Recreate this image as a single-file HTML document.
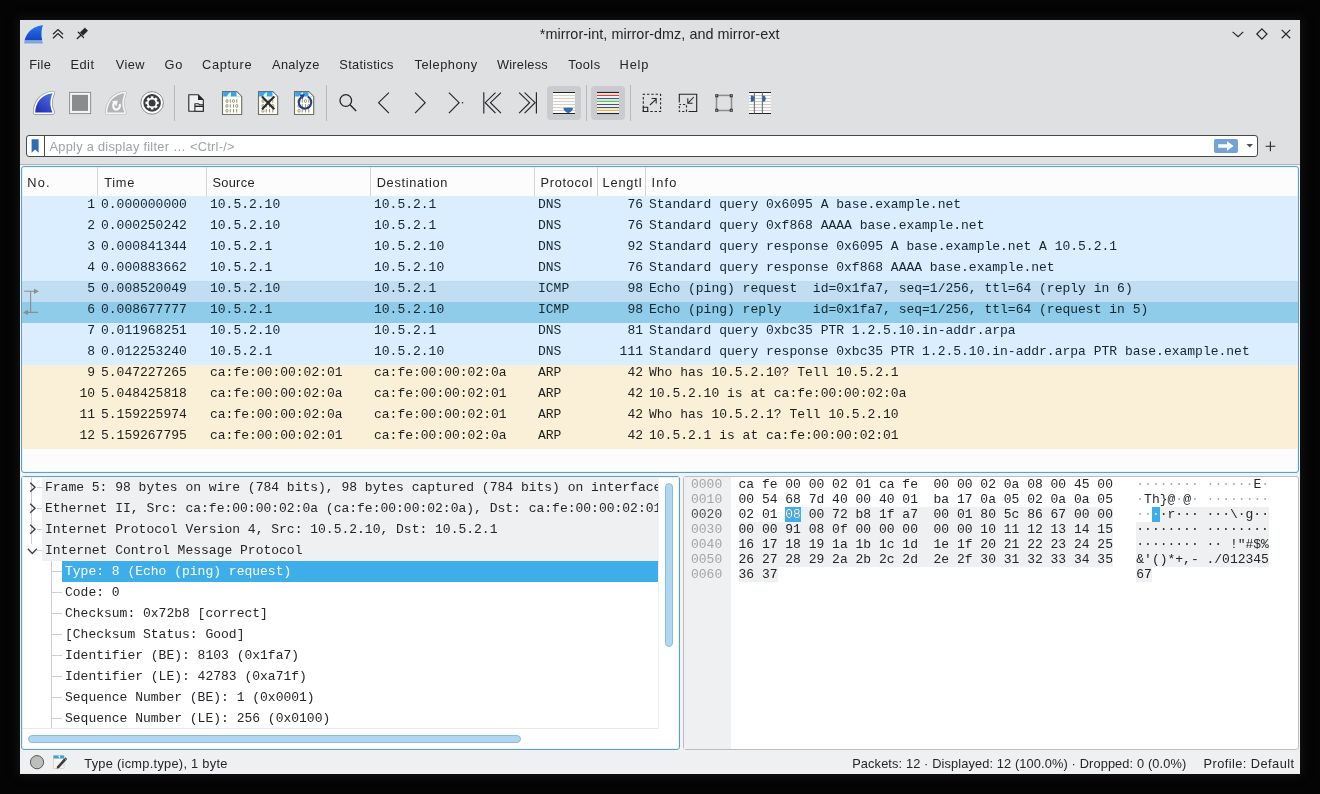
<!DOCTYPE html><html><head><meta charset="utf-8"><title>Wireshark</title><style>
*{margin:0;padding:0;box-sizing:border-box}
html,body{width:1320px;height:794px;overflow:hidden}
body{background:#040405;position:relative;-webkit-font-smoothing:antialiased;font-family:"Liberation Sans",sans-serif;font-size:13px;color:#232629}
.a{position:absolute}
.m{font-family:"Liberation Mono",monospace;font-size:13px;white-space:pre;line-height:17px}
.t{white-space:pre;line-height:16px}
svg{position:absolute;overflow:visible}
</style></head><body><div id="root" class="a" style="left:0;top:0;width:1320px;height:794px;will-change:transform">
<div class="a" style="left:20px;top:20px;width:1280px;height:754px;background:#eff0f1;box-shadow:0 0 10px 1px rgba(24,24,26,0.9)"></div>
<div class="a" style="left:20px;top:20px;width:1280px;height:144px;background:#dee0e2"></div>
<div class="a" style="left:20px;top:164px;width:1280px;height:1px;background:#afb1b3"></div>
<div class="a" style="left:20px;top:165px;width:1280px;height:309px;background:#eaf4f8"></div>
<div class="a" style="left:20px;top:474px;width:1280px;height:2px;background:#e9f5f9"></div>
<div class="a" style="left:680px;top:476px;width:3px;height:274px;background:#f1f3f5"></div>
<div class="a t" style="left:539.8px;top:25.5px;font-size:14.4px;letter-spacing:0.037px;color:#232629">*mirror-int, mirror-dmz, and mirror-ext</div>
<div class="a t" style="left:29.2px;top:56.5px;font-size:12.8px;letter-spacing:0.367px;color:#232629">File</div>
<div class="a t" style="left:70.6px;top:56.5px;font-size:12.8px;letter-spacing:0.433px;color:#232629">Edit</div>
<div class="a t" style="left:115.8px;top:56.5px;font-size:12.8px;letter-spacing:0.433px;color:#232629">View</div>
<div class="a t" style="left:164.5px;top:56.5px;font-size:12.8px;letter-spacing:0.9px;color:#232629">Go</div>
<div class="a t" style="left:202.0px;top:56.5px;font-size:12.8px;letter-spacing:0.667px;color:#232629">Capture</div>
<div class="a t" style="left:272.1px;top:56.5px;font-size:12.8px;letter-spacing:0.3px;color:#232629">Analyze</div>
<div class="a t" style="left:339.3px;top:56.5px;font-size:12.8px;letter-spacing:0.311px;color:#232629">Statistics</div>
<div class="a t" style="left:414.5px;top:56.5px;font-size:12.8px;letter-spacing:0.538px;color:#232629">Telephony</div>
<div class="a t" style="left:496.9px;top:56.5px;font-size:12.8px;letter-spacing:0.257px;color:#232629">Wireless</div>
<div class="a t" style="left:568.3px;top:56.5px;font-size:12.8px;letter-spacing:0.475px;color:#232629">Tools</div>
<div class="a t" style="left:619.6px;top:56.5px;font-size:12.8px;letter-spacing:0.833px;color:#232629">Help</div>
<svg style="left:22px;top:22px" width="26" height="26" viewBox="0 0 26 26">
<defs><linearGradient id="tsg" x1="0" y1="0" x2="0" y2="1"><stop offset="0" stop-color="#2a74ea"/><stop offset="0.8" stop-color="#1446c4"/><stop offset="0.84" stop-color="#8fb0e6"/><stop offset="1" stop-color="#8797bb"/></linearGradient></defs>
<path d="M2.1 21.6 C2.6 14 8 4.8 21 3.1 C19.2 8 18.8 14 21 21.6 Z" fill="none" stroke="#d4eafc" stroke-width="1.4"/>
<path d="M2.1 21.6 C2.6 14 8 4.8 21 3.1 C19.2 8 18.8 14 21 21.6 Z" fill="url(#tsg)"/>
</svg>
<svg style="left:50px;top:26px" width="16" height="16" viewBox="0 0 16 16"><path d="M3 8.3 L8 3.6 L13 8.3 M3 12.3 L8 7.6 L13 12.3" fill="none" stroke="#232629" stroke-width="1.2"/></svg>
<svg style="left:72px;top:24px" width="20" height="20" viewBox="0 0 20 20"><path d="M8.1 8.6 L12.9 3.9 L15.7 6.7 L10.9 11.4 Z" fill="#232629" stroke="#232629" stroke-width="0.6" stroke-linejoin="round"/><path d="M6.3 8.3 L11.6 13.6" stroke="#232629" stroke-width="1.3" stroke-linecap="round"/><path d="M8.8 11.3 L5.3 14.6" stroke="#232629" stroke-width="1.4" stroke-linecap="round"/></svg>
<svg style="left:1228px;top:26px" width="16" height="16" viewBox="0 0 16 16"><path d="M4.6 5.9 L10.1 10.7 L15.2 5.9" fill="none" stroke="#232629" stroke-width="1.2"/></svg>
<svg style="left:1254px;top:26px" width="16" height="16" viewBox="0 0 16 16"><path d="M7.9 2.9 L13 8 L7.9 13.1 L2.8 8 Z" fill="none" stroke="#232629" stroke-width="1.2"/></svg>
<svg style="left:1278px;top:26px" width="16" height="16" viewBox="0 0 16 16"><path d="M3.7 3.9 L12.2 12.3 M12.2 3.9 L3.7 12.3" fill="none" stroke="#232629" stroke-width="1.2"/></svg>
<svg style="left:28px;top:86px" width="32" height="32" viewBox="0 0 32 32">
<defs><linearGradient id="fin" x1="0.8" y1="0" x2="0.2" y2="1"><stop offset="0" stop-color="#4a6ee0"/><stop offset="1" stop-color="#2430b8"/></linearGradient></defs>
<path d="M7.2 26.4 C7.4 17 13 8.5 24.6 7.2 C22 13 21.4 20 24.6 26.4 Z" fill="none" stroke="#8c8e90" stroke-width="4.6" stroke-linejoin="round"/>
<path d="M7.2 26.4 C7.4 17 13 8.5 24.6 7.2 C22 13 21.4 20 24.6 26.4 Z" fill="none" stroke="#ffffff" stroke-width="3.2" stroke-linejoin="round"/>
<path d="M7.2 26.4 C7.4 17 13 8.5 24.6 7.2 C22 13 21.4 20 24.6 26.4 Z" fill="url(#fin)"/>
</svg>
<svg style="left:64px;top:86px" width="32" height="32" viewBox="0 0 32 32">
<rect x="5.6" y="6.4" width="21" height="21.2" fill="#f4f4f4" stroke="#8e9092" stroke-width="1"/>
<rect x="8" y="8.9" width="16" height="16" fill="#8a8b8c"/>
</svg>
<svg style="left:100px;top:86px" width="32" height="32" viewBox="0 0 32 32">
<path d="M7.2 26.4 C7.4 17 13 8.5 24.6 7.2 C22 13 21.4 20 24.6 26.4 Z" fill="none" stroke="#b9bbbd" stroke-width="4.4" stroke-linejoin="round"/>
<path d="M7.2 26.4 C7.4 17 13 8.5 24.6 7.2 C22 13 21.4 20 24.6 26.4 Z" fill="none" stroke="#f6f6f6" stroke-width="3" stroke-linejoin="round"/>
<path d="M7.2 26.4 C7.4 17 13 8.5 24.6 7.2 C22 13 21.4 20 24.6 26.4 Z" fill="#b3b4b6"/>
<path d="M14.2 16.6 C12.4 18.5 13 23.6 16.2 23.6 C19.2 23.6 20.6 20 19.6 18" fill="none" stroke="#f8f8f8" stroke-width="2.2"/>
<path d="M12 15.2 L17.8 14.4 L16.4 20.2 Z" fill="#f8f8f8"/>
</svg>
<svg style="left:136px;top:86px" width="32" height="32" viewBox="0 0 32 32">
<circle cx="16.1" cy="16.9" r="11.3" fill="#ffffff" stroke="#8a8c8e" stroke-width="1"/>
<circle cx="16.1" cy="16.9" r="8.8" fill="#3b3c3e"/>
<g fill="#ffffff" transform="translate(16.1 16.9)">
<circle r="5.2"/>
<rect x="-1.3" y="-6.6" width="2.6" height="13.2"/>
<rect x="-1.3" y="-6.6" width="2.6" height="13.2" transform="rotate(45)"/>
<rect x="-1.3" y="-6.6" width="2.6" height="13.2" transform="rotate(90)"/>
<rect x="-1.3" y="-6.6" width="2.6" height="13.2" transform="rotate(135)"/>
</g>
<circle cx="16.1" cy="16.9" r="3.5" fill="#3b3c3e"/>
</svg>
<div class="a" style="left:174px;top:85px;width:1px;height:36px;background:#b7b9bb"></div>
<div class="a" style="left:326px;top:85px;width:1px;height:36px;background:#b7b9bb"></div>
<div class="a" style="left:586px;top:85px;width:1px;height:36px;background:#b7b9bb"></div>
<div class="a" style="left:630px;top:85px;width:1px;height:36px;background:#b7b9bb"></div>
<svg style="left:182px;top:86px" width="28" height="32" viewBox="0 0 28 32">
<path d="M6.8 8.8 H16.3 L21.3 13.8 V25.2 H6.8 Z" fill="#f0f0f0" stroke="#232629" stroke-width="1.1" stroke-linejoin="round"/>
<path d="M16 8.4 L21.7 14.1 H16 Z" fill="#232629"/>
<path d="M12.9 17.8 H16.6 L17.6 18.8 H21.3 V25.2 H12.9 Z" fill="#f0f0f0" stroke="#232629" stroke-width="1.1" stroke-linejoin="round"/>
<path d="M12.9 19.6 H21.3 V21 H12.9 Z" fill="#232629"/>
</svg>
<svg style="left:218px;top:86px" width="28" height="32" viewBox="0 0 28 32">
<path d="M4.5 5.5 H18.7 L23.7 10.5 V28.5 H4.5 Z" fill="#fffdf0" stroke="#6b6d6f" stroke-width="1.1"/>
<path d="M5.1 6.1 H18.4 L22.9 10.6 H5.1 Z" fill="#37a6e4"/>
<path d="M18.5 6 V10.6 H23.2 Z" fill="#fafafa"/>
<path d="M9 10.8 C9.5 8.5 11 6.8 12.4 6.2 L12.9 6.2 V10.8 Z" fill="#e9f7fd"/>
<ellipse cx="9.0" cy="15.0" rx="1.05" ry="1.5" fill="none" stroke="#8f9088" stroke-width="0.9"/><path d="M12.25 13.3 V16.7" stroke="#8f9088" stroke-width="1"/><ellipse cx="15.5" cy="15.0" rx="1.05" ry="1.5" fill="none" stroke="#8f9088" stroke-width="0.9"/><path d="M18.75 13.3 V16.7" stroke="#8f9088" stroke-width="1"/><ellipse cx="9.0" cy="19.9" rx="1.05" ry="1.5" fill="none" stroke="#8f9088" stroke-width="0.9"/><path d="M12.25 18.2 V21.599999999999998" stroke="#8f9088" stroke-width="1"/><path d="M15.5 18.2 V21.599999999999998" stroke="#8f9088" stroke-width="1"/><ellipse cx="18.75" cy="19.9" rx="1.05" ry="1.5" fill="none" stroke="#8f9088" stroke-width="0.9"/><ellipse cx="9.0" cy="24.8" rx="1.05" ry="1.5" fill="none" stroke="#8f9088" stroke-width="0.9"/><path d="M12.25 23.1 V26.5" stroke="#8f9088" stroke-width="1"/><path d="M15.5 23.1 V26.5" stroke="#8f9088" stroke-width="1"/><path d="M18.75 23.1 V26.5" stroke="#8f9088" stroke-width="1"/>

</svg>
<svg style="left:254px;top:86px" width="28" height="32" viewBox="0 0 28 32">
<path d="M4.5 5.5 H18.7 L23.7 10.5 V28.5 H4.5 Z" fill="#fffdf0" stroke="#6b6d6f" stroke-width="1.1"/>
<path d="M5.1 6.1 H18.4 L22.9 10.6 H5.1 Z" fill="#37a6e4"/>
<path d="M18.5 6 V10.6 H23.2 Z" fill="#fafafa"/>
<path d="M9 10.8 C9.5 8.5 11 6.8 12.4 6.2 L12.9 6.2 V10.8 Z" fill="#e9f7fd"/>
<ellipse cx="9.0" cy="15.0" rx="1.05" ry="1.5" fill="none" stroke="#8f9088" stroke-width="0.9"/><path d="M12.25 13.3 V16.7" stroke="#8f9088" stroke-width="1"/><ellipse cx="15.5" cy="15.0" rx="1.05" ry="1.5" fill="none" stroke="#8f9088" stroke-width="0.9"/><path d="M18.75 13.3 V16.7" stroke="#8f9088" stroke-width="1"/><ellipse cx="9.0" cy="19.9" rx="1.05" ry="1.5" fill="none" stroke="#8f9088" stroke-width="0.9"/><path d="M12.25 18.2 V21.599999999999998" stroke="#8f9088" stroke-width="1"/><path d="M15.5 18.2 V21.599999999999998" stroke="#8f9088" stroke-width="1"/><ellipse cx="18.75" cy="19.9" rx="1.05" ry="1.5" fill="none" stroke="#8f9088" stroke-width="0.9"/><ellipse cx="9.0" cy="24.8" rx="1.05" ry="1.5" fill="none" stroke="#8f9088" stroke-width="0.9"/><path d="M12.25 23.1 V26.5" stroke="#8f9088" stroke-width="1"/><path d="M15.5 23.1 V26.5" stroke="#8f9088" stroke-width="1"/><path d="M18.75 23.1 V26.5" stroke="#8f9088" stroke-width="1"/>
<path d="M8 10.5 L20.3 23.2 M20.3 10.5 L8 23.2" stroke="#2a2b2c" stroke-width="2.1"/>
</svg>
<svg style="left:290px;top:86px" width="28" height="32" viewBox="0 0 28 32">
<path d="M4.5 5.5 H18.7 L23.7 10.5 V28.5 H4.5 Z" fill="#fffdf0" stroke="#6b6d6f" stroke-width="1.1"/>
<path d="M5.1 6.1 H18.4 L22.9 10.6 H5.1 Z" fill="#37a6e4"/>
<path d="M18.5 6 V10.6 H23.2 Z" fill="#fafafa"/>
<path d="M9 10.8 C9.5 8.5 11 6.8 12.4 6.2 L12.9 6.2 V10.8 Z" fill="#e9f7fd"/>
<ellipse cx="9.0" cy="15.0" rx="1.05" ry="1.5" fill="none" stroke="#8f9088" stroke-width="0.9"/><path d="M12.25 13.3 V16.7" stroke="#8f9088" stroke-width="1"/><ellipse cx="15.5" cy="15.0" rx="1.05" ry="1.5" fill="none" stroke="#8f9088" stroke-width="0.9"/><path d="M18.75 13.3 V16.7" stroke="#8f9088" stroke-width="1"/><ellipse cx="9.0" cy="19.9" rx="1.05" ry="1.5" fill="none" stroke="#8f9088" stroke-width="0.9"/><path d="M12.25 18.2 V21.599999999999998" stroke="#8f9088" stroke-width="1"/><path d="M15.5 18.2 V21.599999999999998" stroke="#8f9088" stroke-width="1"/><ellipse cx="18.75" cy="19.9" rx="1.05" ry="1.5" fill="none" stroke="#8f9088" stroke-width="0.9"/><ellipse cx="9.0" cy="24.8" rx="1.05" ry="1.5" fill="none" stroke="#8f9088" stroke-width="0.9"/><path d="M12.25 23.1 V26.5" stroke="#8f9088" stroke-width="1"/><path d="M15.5 23.1 V26.5" stroke="#8f9088" stroke-width="1"/><path d="M18.75 23.1 V26.5" stroke="#8f9088" stroke-width="1"/>
<path d="M17.7 10.6 A6.3 6.3 0 1 1 11.2 11.3" fill="none" stroke="#2c3b7c" stroke-width="2.1"/><path d="M9.3 8.6 L14.8 8.2 L12.4 13.6 Z" fill="#2c3b7c"/>
</svg>
<svg style="left:330px;top:86px" width="32" height="32" viewBox="0 0 32 32"><circle cx="15.8" cy="14.5" r="5.8" fill="none" stroke="#232629" stroke-width="1.3"/><path d="M20 18.7 L26.2 24.9" stroke="#232629" stroke-width="1.4"/></svg>
<svg style="left:366px;top:86px" width="32" height="32" viewBox="0 0 32 32"><path d="M22.9 6.7 L12.6 16.7 L22.9 27.2" fill="none" stroke="#232629" stroke-width="1.15"/></svg>
<svg style="left:402px;top:86px" width="32" height="32" viewBox="0 0 32 32"><path d="M13.1 6.7 L23.2 16.7 L13.1 27.2" fill="none" stroke="#232629" stroke-width="1.15"/></svg>
<svg style="left:438px;top:86px" width="32" height="32" viewBox="0 0 32 32"><path d="M10.9 6.7 L21.1 16.7 L10.9 27.2" fill="none" stroke="#232629" stroke-width="1.15"/><circle cx="24.5" cy="16.7" r="0.8" fill="#232629"/></svg>
<svg style="left:474px;top:86px" width="32" height="32" viewBox="0 0 32 32"><path d="M9.8 6.3 V27.4" stroke="#232629" stroke-width="1.15"/><path d="M21.5 6.7 L11.2 16.7 L21.5 27.2 M27 6.7 L16.5 16.7 L27 27.2" fill="none" stroke="#232629" stroke-width="1.15"/></svg>
<svg style="left:510px;top:86px" width="32" height="32" viewBox="0 0 32 32"><path d="M26.4 6.3 V27.4" stroke="#232629" stroke-width="1.15"/><path d="M9.1 6.7 L19.6 16.7 L9.1 27.2 M14.6 6.7 L25.1 16.7 L14.6 27.2" fill="none" stroke="#232629" stroke-width="1.15"/></svg>
<div class="a" style="left:547px;top:86px;width:34px;height:34px;background:#c9cbce;border-radius:4px"></div>
<svg style="left:547px;top:86px" width="34" height="34" viewBox="0 0 34 34">
<rect x="6" y="6.5" width="22" height="21" fill="#fcfcfa"/>
<g stroke="#d6cfc2" stroke-width="1"><path d="M6 9.5 H28 M6 12.5 H28 M6 15.5 H28 M6 18.5 H28 M6 21.5 H28 M6 24.5 H28"/></g>
<path d="M6 6.5 H28 M6 27.5 H28" stroke="#232629" stroke-width="1.2"/>
<path d="M16.2 22.2 C17.5 21.6 24.5 21.6 26.2 22.2 C25.5 24.5 23 26.8 21.2 27.2 C19.4 26.8 17 24.5 16.2 22.2 Z" fill="#2f6cb6"/>
</svg>
<div class="a" style="left:591px;top:86px;width:34px;height:34px;background:#c9cbce;border-radius:4px"></div>
<svg style="left:591px;top:86px" width="34" height="34" viewBox="0 0 34 34">
<rect x="6" y="6.5" width="22" height="21" fill="#ffffff"/>
<rect x="6" y="7.5" width="22" height="2" fill="#fde2e0"/>
<rect x="6" y="13.5" width="22" height="2" fill="#cfeec7"/>
<rect x="6" y="22.5" width="22" height="2.2" fill="#fbf0c0"/>
<g stroke-width="1.2"><path d="M6 6.5 H28" stroke="#232629"/><path d="M6 9.5 H28" stroke="#d1473c"/><path d="M6 12.5 H28" stroke="#3a5f9a"/><path d="M6 15.5 H28" stroke="#6bbf4c"/><path d="M6 18.5 H28" stroke="#3b5585"/><path d="M6 21.5 H28" stroke="#5a4a66"/><path d="M6 24.5 H28" stroke="#d9b24c"/><path d="M6 27.5 H28" stroke="#232629"/></g>
</svg>
<svg style="left:636px;top:86px" width="32" height="32" viewBox="0 0 32 32">
<path d="M7.3 8.3 H24.6 V25.5 H7.3 Z" fill="none" stroke="#232629" stroke-width="1.1" stroke-dasharray="2.4 1.9" stroke-dashoffset="0.6"/>
<path d="M7.3 21.2 H11.7 V25.5 H7.3 Z" fill="none" stroke="#232629" stroke-width="1.1"/>
<path d="M13.9 19 L20.2 13.2 M15.6 12.4 H20.2 V17.5" fill="none" stroke="#232629" stroke-width="1.05"/>
</svg>
<svg style="left:672px;top:86px" width="32" height="32" viewBox="0 0 32 32">
<path d="M7.3 16.6 V8.3 H24.7 V25.5 H16.5" fill="none" stroke="#232629" stroke-width="1.1"/>
<path d="M7.3 18.5 H14.5 V25.5 H7.3 Z" fill="none" stroke="#232629" stroke-width="1.1" stroke-dasharray="2.2 2" stroke-dashoffset="0.5"/>
<path d="M21.8 11 L15.8 17.3 M15.8 12.2 V17.3 H20.6" fill="none" stroke="#232629" stroke-width="1.05"/>
</svg>
<svg style="left:708px;top:86px" width="32" height="32" viewBox="0 0 32 32">
<rect x="8.5" y="9.4" width="15" height="15.1" fill="none" stroke="#8a8c8e" stroke-width="1.5"/>
<g fill="#e6e7e8" stroke="#2b2c2d" stroke-width="1"><rect x="7.75" y="8.75" width="2" height="2"/><rect x="22.25" y="8.75" width="2" height="2"/><rect x="7.75" y="23.25" width="2" height="2"/><rect x="22.25" y="23.25" width="2" height="2"/></g>
</svg>
<svg style="left:744px;top:86px" width="32" height="32" viewBox="0 0 32 32">
<rect x="5" y="6.5" width="22" height="21" fill="#fbfbfb"/>
<g stroke="#cdc9c0" stroke-width="1"><path d="M5 9.5 H27 M5 12.5 H27 M5 15.5 H27 M5 18.5 H27 M5 21.5 H27 M5 24.5 H27"/></g>
<path d="M5 6.5 H27 M5 27.5 H27" stroke="#232629" stroke-width="1.2"/>
<path d="M10.4 6.5 V27.5 M18.4 6.5 V27.5" stroke="#707274" stroke-width="1.1"/>
<path d="M6.8 9.6 H8 C9.8 9.6 10.3 11.4 10.3 12.7 C10.3 14 9.8 15.8 8 15.8 H6.8 Z" fill="#2f64aa"/>
<path d="M18.5 9.6 H19.2 C21 9.6 21.7 11.4 21.7 12.7 C21.7 14 21 15.8 19.2 15.8 H18.5 Z" fill="#2f64aa"/>
</svg>
<div class="a" style="left:26px;top:135px;width:1232px;height:22px;background:#fff;border:1px solid #45484b;border-radius:3px"></div>
<div class="a" style="left:44px;top:136px;width:1px;height:20px;background:#45484b"></div>
<svg style="left:27px;top:136px" width="17" height="20" viewBox="0 0 17 20"><path d="M4.6 3.2 H11.6 V16.8 L8.1 13.6 L4.6 16.8 Z" fill="#2f6cb6"/></svg>
<svg style="left:1214px;top:139px" width="24" height="14" viewBox="0 0 24 14"><rect x="0" y="0" width="24" height="14" rx="2" fill="#72a2d6"/><path d="M4.2 5.2 H13 V2.3 L19.6 7 L13 11.7 V8.8 H4.2 Z" fill="#ffffff"/></svg>
<svg style="left:1245px;top:143px" width="10" height="6" viewBox="0 0 10 6"><path d="M1.5 1 H8 L4.75 4.6 Z" fill="#4d4f52"/></svg>
<svg style="left:1262px;top:138px" width="17" height="17" viewBox="0 0 17 17"><path d="M8.4 3.4 V13.2 M3.6 8.3 H13.3" stroke="#232629" stroke-width="1.1"/></svg>
<div class="a t" style="left:49.5px;top:139.4px;font-size:12.8px;letter-spacing:0.269px;color:#9fa1a3">Apply a display filter … &lt;Ctrl-/&gt;</div>
<div class="a" style="left:21px;top:166px;width:1278px;height:307px;background:#fcfcfc;border:1px solid #6b9bb6;border-radius:3px;box-shadow:inset 0 0 0 1px #dcfafc"></div>
<div class="a" style="left:97px;top:167px;width:1px;height:29px;background:#d3d5d7"></div>
<div class="a" style="left:206px;top:167px;width:1px;height:29px;background:#d3d5d7"></div>
<div class="a" style="left:370px;top:167px;width:1px;height:29px;background:#d3d5d7"></div>
<div class="a" style="left:534px;top:167px;width:1px;height:29px;background:#d3d5d7"></div>
<div class="a" style="left:597px;top:167px;width:1px;height:29px;background:#d3d5d7"></div>
<div class="a" style="left:645px;top:167px;width:1px;height:29px;background:#d3d5d7"></div>
<div class="a t" style="left:27.3px;top:175.4px;font-size:12.8px;letter-spacing:1.15px;color:#232629">No.</div>
<div class="a t" style="left:104.3px;top:175.4px;font-size:12.8px;letter-spacing:0.667px;color:#232629">Time</div>
<div class="a t" style="left:212.4px;top:175.4px;font-size:12.8px;letter-spacing:0.32px;color:#232629">Source</div>
<div class="a t" style="left:376.7px;top:175.4px;font-size:12.8px;letter-spacing:0.67px;color:#232629">Destination</div>
<div class="a t" style="left:540.6px;top:175.4px;font-size:12.8px;letter-spacing:0.671px;color:#232629">Protocol</div>
<div class="a t" style="left:602.5px;top:175.4px;font-size:12.8px;letter-spacing:0.84px;color:#232629">Lengtl</div>
<div class="a t" style="left:651.6px;top:175.4px;font-size:12.8px;letter-spacing:1.133px;color:#232629">Info</div>
<div class="a" style="left:22px;top:196px;width:1276px;height:1px;background:#e4ebf3"></div>
<div class="a" style="left:22px;top:197px;width:1276px;height:21px;background:#daeeff"></div>
<div class="a m" style="left:22px;top:196px;width:73px;text-align:right;color:#12272e">1</div>
<div class="a m" style="left:101px;top:196px;color:#12272e">0.000000000</div>
<div class="a m" style="left:210px;top:196px;color:#12272e">10.5.2.10</div>
<div class="a m" style="left:374px;top:196px;color:#12272e">10.5.2.1</div>
<div class="a m" style="left:538px;top:196px;color:#12272e">DNS</div>
<div class="a m" style="left:597px;top:196px;width:46px;text-align:right;color:#12272e">76</div>
<div class="a m" style="left:649px;top:196px;color:#12272e">Standard query 0x6095 A base.example.net</div>
<div class="a" style="left:22px;top:218px;width:1276px;height:21px;background:#daeeff"></div>
<div class="a m" style="left:22px;top:217px;width:73px;text-align:right;color:#12272e">2</div>
<div class="a m" style="left:101px;top:217px;color:#12272e">0.000250242</div>
<div class="a m" style="left:210px;top:217px;color:#12272e">10.5.2.10</div>
<div class="a m" style="left:374px;top:217px;color:#12272e">10.5.2.1</div>
<div class="a m" style="left:538px;top:217px;color:#12272e">DNS</div>
<div class="a m" style="left:597px;top:217px;width:46px;text-align:right;color:#12272e">76</div>
<div class="a m" style="left:649px;top:217px;color:#12272e">Standard query 0xf868 AAAA base.example.net</div>
<div class="a" style="left:22px;top:239px;width:1276px;height:21px;background:#daeeff"></div>
<div class="a m" style="left:22px;top:238px;width:73px;text-align:right;color:#12272e">3</div>
<div class="a m" style="left:101px;top:238px;color:#12272e">0.000841344</div>
<div class="a m" style="left:210px;top:238px;color:#12272e">10.5.2.1</div>
<div class="a m" style="left:374px;top:238px;color:#12272e">10.5.2.10</div>
<div class="a m" style="left:538px;top:238px;color:#12272e">DNS</div>
<div class="a m" style="left:597px;top:238px;width:46px;text-align:right;color:#12272e">92</div>
<div class="a m" style="left:649px;top:238px;color:#12272e">Standard query response 0x6095 A base.example.net A 10.5.2.1</div>
<div class="a" style="left:22px;top:260px;width:1276px;height:21px;background:#daeeff"></div>
<div class="a m" style="left:22px;top:259px;width:73px;text-align:right;color:#12272e">4</div>
<div class="a m" style="left:101px;top:259px;color:#12272e">0.000883662</div>
<div class="a m" style="left:210px;top:259px;color:#12272e">10.5.2.1</div>
<div class="a m" style="left:374px;top:259px;color:#12272e">10.5.2.10</div>
<div class="a m" style="left:538px;top:259px;color:#12272e">DNS</div>
<div class="a m" style="left:597px;top:259px;width:46px;text-align:right;color:#12272e">76</div>
<div class="a m" style="left:649px;top:259px;color:#12272e">Standard query response 0xf868 AAAA base.example.net</div>
<div class="a" style="left:22px;top:281px;width:1276px;height:21px;background:#c1ddf2"></div>
<div class="a m" style="left:22px;top:280px;width:73px;text-align:right;color:#12272e">5</div>
<div class="a m" style="left:101px;top:280px;color:#12272e">0.008520049</div>
<div class="a m" style="left:210px;top:280px;color:#12272e">10.5.2.10</div>
<div class="a m" style="left:374px;top:280px;color:#12272e">10.5.2.1</div>
<div class="a m" style="left:538px;top:280px;color:#12272e">ICMP</div>
<div class="a m" style="left:597px;top:280px;width:46px;text-align:right;color:#12272e">98</div>
<div class="a m" style="left:649px;top:280px;color:#12272e">Echo (ping) request  id=0x1fa7, seq=1/256, ttl=64 (reply in 6)</div>
<div class="a" style="left:22px;top:302px;width:1276px;height:21px;background:#8fcce9"></div>
<div class="a m" style="left:22px;top:301px;width:73px;text-align:right;color:#12272e">6</div>
<div class="a m" style="left:101px;top:301px;color:#12272e">0.008677777</div>
<div class="a m" style="left:210px;top:301px;color:#12272e">10.5.2.1</div>
<div class="a m" style="left:374px;top:301px;color:#12272e">10.5.2.10</div>
<div class="a m" style="left:538px;top:301px;color:#12272e">ICMP</div>
<div class="a m" style="left:597px;top:301px;width:46px;text-align:right;color:#12272e">98</div>
<div class="a m" style="left:649px;top:301px;color:#12272e">Echo (ping) reply    id=0x1fa7, seq=1/256, ttl=64 (request in 5)</div>
<div class="a" style="left:22px;top:323px;width:1276px;height:21px;background:#daeeff"></div>
<div class="a m" style="left:22px;top:322px;width:73px;text-align:right;color:#12272e">7</div>
<div class="a m" style="left:101px;top:322px;color:#12272e">0.011968251</div>
<div class="a m" style="left:210px;top:322px;color:#12272e">10.5.2.10</div>
<div class="a m" style="left:374px;top:322px;color:#12272e">10.5.2.1</div>
<div class="a m" style="left:538px;top:322px;color:#12272e">DNS</div>
<div class="a m" style="left:597px;top:322px;width:46px;text-align:right;color:#12272e">81</div>
<div class="a m" style="left:649px;top:322px;color:#12272e">Standard query 0xbc35 PTR 1.2.5.10.in-addr.arpa</div>
<div class="a" style="left:22px;top:344px;width:1276px;height:21px;background:#daeeff"></div>
<div class="a m" style="left:22px;top:343px;width:73px;text-align:right;color:#12272e">8</div>
<div class="a m" style="left:101px;top:343px;color:#12272e">0.012253240</div>
<div class="a m" style="left:210px;top:343px;color:#12272e">10.5.2.1</div>
<div class="a m" style="left:374px;top:343px;color:#12272e">10.5.2.10</div>
<div class="a m" style="left:538px;top:343px;color:#12272e">DNS</div>
<div class="a m" style="left:597px;top:343px;width:46px;text-align:right;color:#12272e">111</div>
<div class="a m" style="left:649px;top:343px;color:#12272e">Standard query response 0xbc35 PTR 1.2.5.10.in-addr.arpa PTR base.example.net</div>
<div class="a" style="left:22px;top:365px;width:1276px;height:21px;background:#faf0d7"></div>
<div class="a m" style="left:22px;top:364px;width:73px;text-align:right;color:#1e1f1c">9</div>
<div class="a m" style="left:101px;top:364px;color:#1e1f1c">5.047227265</div>
<div class="a m" style="left:210px;top:364px;color:#1e1f1c">ca:fe:00:00:02:01</div>
<div class="a m" style="left:374px;top:364px;color:#1e1f1c">ca:fe:00:00:02:0a</div>
<div class="a m" style="left:538px;top:364px;color:#1e1f1c">ARP</div>
<div class="a m" style="left:597px;top:364px;width:46px;text-align:right;color:#1e1f1c">42</div>
<div class="a m" style="left:649px;top:364px;color:#1e1f1c">Who has 10.5.2.10? Tell 10.5.2.1</div>
<div class="a" style="left:22px;top:386px;width:1276px;height:21px;background:#faf0d7"></div>
<div class="a m" style="left:22px;top:385px;width:73px;text-align:right;color:#1e1f1c">10</div>
<div class="a m" style="left:101px;top:385px;color:#1e1f1c">5.048425818</div>
<div class="a m" style="left:210px;top:385px;color:#1e1f1c">ca:fe:00:00:02:0a</div>
<div class="a m" style="left:374px;top:385px;color:#1e1f1c">ca:fe:00:00:02:01</div>
<div class="a m" style="left:538px;top:385px;color:#1e1f1c">ARP</div>
<div class="a m" style="left:597px;top:385px;width:46px;text-align:right;color:#1e1f1c">42</div>
<div class="a m" style="left:649px;top:385px;color:#1e1f1c">10.5.2.10 is at ca:fe:00:00:02:0a</div>
<div class="a" style="left:22px;top:407px;width:1276px;height:21px;background:#faf0d7"></div>
<div class="a m" style="left:22px;top:406px;width:73px;text-align:right;color:#1e1f1c">11</div>
<div class="a m" style="left:101px;top:406px;color:#1e1f1c">5.159225974</div>
<div class="a m" style="left:210px;top:406px;color:#1e1f1c">ca:fe:00:00:02:0a</div>
<div class="a m" style="left:374px;top:406px;color:#1e1f1c">ca:fe:00:00:02:01</div>
<div class="a m" style="left:538px;top:406px;color:#1e1f1c">ARP</div>
<div class="a m" style="left:597px;top:406px;width:46px;text-align:right;color:#1e1f1c">42</div>
<div class="a m" style="left:649px;top:406px;color:#1e1f1c">Who has 10.5.2.1? Tell 10.5.2.10</div>
<div class="a" style="left:22px;top:428px;width:1276px;height:21px;background:#faf0d7"></div>
<div class="a m" style="left:22px;top:427px;width:73px;text-align:right;color:#1e1f1c">12</div>
<div class="a m" style="left:101px;top:427px;color:#1e1f1c">5.159267795</div>
<div class="a m" style="left:210px;top:427px;color:#1e1f1c">ca:fe:00:00:02:01</div>
<div class="a m" style="left:374px;top:427px;color:#1e1f1c">ca:fe:00:00:02:0a</div>
<div class="a m" style="left:538px;top:427px;color:#1e1f1c">ARP</div>
<div class="a m" style="left:597px;top:427px;width:46px;text-align:right;color:#1e1f1c">42</div>
<div class="a m" style="left:649px;top:427px;color:#1e1f1c">10.5.2.1 is at ca:fe:00:00:02:01</div>
<svg style="left:22px;top:281px" width="20" height="42" viewBox="0 0 20 42"><g stroke="#8b8e91" stroke-width="1.1" fill="none"><path d="M8.6 10.3 V31.4 M2.2 10.3 H13 M5.5 31.4 H16.2"/></g><path d="M12 7.7 L17 10.3 L12 12.9 Z M6 28.8 L1 31.4 L6 34 Z" fill="#8b8e91"/></svg>
<div class="a" style="left:21px;top:476px;width:659px;height:274px;background:#fff;border:1px solid #6b9bb6;border-radius:3px;box-shadow:inset 0 0 0 1px #dcfafc"></div>
<div class="a" style="left:683px;top:476px;width:616px;height:274px;background:#fff;border:1px solid #bdbdbd;border-radius:3px"></div>
<div class="a" style="left:22px;top:477px;width:636px;height:251px;overflow:hidden">
<div class="a" style="left:9px;top:0px;width:1px;height:67px;background:#cbcdcf"></div>
<div class="a" style="left:29px;top:84px;width:1px;height:167px;background:#cbcdcf"></div>
<div class="a" style="left:20px;top:0px;width:616px;height:21px;background:#eff0f1"></div>
<div class="a" style="left:15px;top:10px;width:5px;height:1px;background:#cbcdcf"></div>
<svg style="left:7px;top:5px" width="8" height="11"><path d="M1.2 0.8 L6 5.3 L1.2 9.8" fill="none" stroke="#3b3e41" stroke-width="1.4"/></svg>
<div class="a m" style="left:23px;top:2px;color:#232629">Frame 5: 98 bytes on wire (784 bits), 98 bytes captured (784 bits) on interface eth0, id 0</div>
<div class="a" style="left:20px;top:21px;width:616px;height:21px;background:#eff0f1"></div>
<div class="a" style="left:15px;top:31px;width:5px;height:1px;background:#cbcdcf"></div>
<svg style="left:7px;top:26px" width="8" height="11"><path d="M1.2 0.8 L6 5.3 L1.2 9.8" fill="none" stroke="#3b3e41" stroke-width="1.4"/></svg>
<div class="a m" style="left:23px;top:23px;color:#232629">Ethernet II, Src: ca:fe:00:00:02:0a (ca:fe:00:00:02:0a), Dst: ca:fe:00:00:02:01 (ca:fe:00:00:02:01)</div>
<div class="a" style="left:20px;top:42px;width:616px;height:21px;background:#eff0f1"></div>
<div class="a" style="left:15px;top:52px;width:5px;height:1px;background:#cbcdcf"></div>
<svg style="left:7px;top:47px" width="8" height="11"><path d="M1.2 0.8 L6 5.3 L1.2 9.8" fill="none" stroke="#3b3e41" stroke-width="1.4"/></svg>
<div class="a m" style="left:23px;top:44px;color:#232629">Internet Protocol Version 4, Src: 10.5.2.10, Dst: 10.5.2.1</div>
<div class="a" style="left:20px;top:63px;width:616px;height:21px;background:#eff0f1"></div>
<div class="a" style="left:15px;top:73px;width:5px;height:1px;background:#cbcdcf"></div>
<svg style="left:5px;top:71px" width="11" height="8"><path d="M0.8 0.8 L5.3 5.5 L9.8 0.8" fill="none" stroke="#3b3e41" stroke-width="1.4"/></svg>
<div class="a m" style="left:23px;top:65px;color:#232629">Internet Control Message Protocol</div>
<div class="a" style="left:30px;top:94px;width:10px;height:1px;background:#cbcdcf"></div>
<div class="a" style="left:40px;top:84px;width:596px;height:21px;background:#3daee9"></div>
<div class="a m" style="left:43px;top:86px;color:#ffffff">Type: 8 (Echo (ping) request)</div>
<div class="a" style="left:30px;top:115px;width:10px;height:1px;background:#cbcdcf"></div>
<div class="a m" style="left:43px;top:107px;color:#232629">Code: 0</div>
<div class="a" style="left:30px;top:136px;width:10px;height:1px;background:#cbcdcf"></div>
<div class="a m" style="left:43px;top:128px;color:#232629">Checksum: 0x72b8 [correct]</div>
<div class="a" style="left:30px;top:157px;width:10px;height:1px;background:#cbcdcf"></div>
<div class="a m" style="left:43px;top:149px;color:#232629">[Checksum Status: Good]</div>
<div class="a" style="left:30px;top:178px;width:10px;height:1px;background:#cbcdcf"></div>
<div class="a m" style="left:43px;top:170px;color:#232629">Identifier (BE): 8103 (0x1fa7)</div>
<div class="a" style="left:30px;top:199px;width:10px;height:1px;background:#cbcdcf"></div>
<div class="a m" style="left:43px;top:191px;color:#232629">Identifier (LE): 42783 (0xa71f)</div>
<div class="a" style="left:30px;top:220px;width:10px;height:1px;background:#cbcdcf"></div>
<div class="a m" style="left:43px;top:212px;color:#232629">Sequence Number (BE): 1 (0x0001)</div>
<div class="a" style="left:30px;top:241px;width:10px;height:1px;background:#cbcdcf"></div>
<div class="a m" style="left:43px;top:233px;color:#232629">Sequence Number (LE): 256 (0x0100)</div>
</div>
<div class="a" style="left:22px;top:477px;width:657px;height:1px;background:#dcfafc;opacity:0.85"></div>
<div class="a" style="left:22px;top:728px;width:636px;height:1px;background:#e9eaeb"></div>
<div class="a" style="left:658px;top:477px;width:1px;height:252px;background:#f0f0f0"></div>
<div class="a" style="left:665px;top:483px;width:8px;height:164px;background:#b0d7f0;border:1px solid #8dbcdb;border-radius:4px"></div>
<div class="a" style="left:28px;top:735px;width:493px;height:8px;background:#b0d7f0;border:1px solid #8dbcdb;border-radius:4px"></div>
<div class="a" style="left:684px;top:477px;width:47px;height:272px;background:#eff0f1"></div>
<div class="a m" style="left:691px;top:476px;color:#a3a5a7">0000</div>
<div class="a m" style="left:738.5px;top:476px;color:#232629">ca fe 00 00 02 01 ca fe  00 00 02 0a 08 00 45 00 </div>
<div class="a m" style="left:1136.3px;top:476px;color:#232629"><span style="color:#a8aaac">·</span><span style="color:#a8aaac">·</span><span style="color:#a8aaac">·</span><span style="color:#a8aaac">·</span><span style="color:#a8aaac">·</span><span style="color:#a8aaac">·</span><span style="color:#a8aaac">·</span><span style="color:#a8aaac">·</span> <span style="color:#a8aaac">·</span><span style="color:#a8aaac">·</span><span style="color:#a8aaac">·</span><span style="color:#a8aaac">·</span><span style="color:#a8aaac">·</span><span style="color:#a8aaac">·</span>E<span style="color:#a8aaac">·</span></div>
<div class="a m" style="left:691px;top:491px;color:#a3a5a7">0010</div>
<div class="a m" style="left:738.5px;top:491px;color:#232629">00 54 68 7d 40 00 40 01  ba 17 0a 05 02 0a 0a 05 </div>
<div class="a m" style="left:1136.3px;top:491px;color:#232629"><span style="color:#a8aaac">·</span>Th}@<span style="color:#a8aaac">·</span>@<span style="color:#a8aaac">·</span> <span style="color:#a8aaac">·</span><span style="color:#a8aaac">·</span><span style="color:#a8aaac">·</span><span style="color:#a8aaac">·</span><span style="color:#a8aaac">·</span><span style="color:#a8aaac">·</span><span style="color:#a8aaac">·</span><span style="color:#a8aaac">·</span></div>
<div class="a" style="left:785.3px;top:507px;width:327.5999999999999px;height:15px;background:#eff0f1"></div>
<div class="a" style="left:1151.9px;top:507px;width:116.99999999999977px;height:15px;background:#eff0f1"></div>
<div class="a" style="left:785.3px;top:507px;width:15.6px;height:15px;background:#3daee9"></div>
<div class="a" style="left:1151.9px;top:507px;width:7.8px;height:15px;background:#3daee9"></div>
<div class="a m" style="left:691px;top:506px;color:#4d4f52">0020</div>
<div class="a m" style="left:738.5px;top:506px;color:#232629">02 01 08 00 72 b8 1f a7  00 01 80 5c 86 67 00 00 </div>
<div class="a m" style="left:1136.3px;top:506px;color:#232629"><span style="color:#a8aaac">·</span><span style="color:#a8aaac">·</span>··r··· ···\·g··</div>
<div class="a m" style="left:785.3px;top:506px;color:#fff">08</div>
<div class="a m" style="left:1151.9px;top:506px;color:#fff">·</div>
<div class="a" style="left:738.5px;top:522px;width:374.39999999999986px;height:15px;background:#eff0f1"></div>
<div class="a" style="left:1136.3px;top:522px;width:132.5999999999999px;height:15px;background:#eff0f1"></div>
<div class="a m" style="left:691px;top:521px;color:#a3a5a7">0030</div>
<div class="a m" style="left:738.5px;top:521px;color:#232629">00 00 91 08 0f 00 00 00  00 00 10 11 12 13 14 15 </div>
<div class="a m" style="left:1136.3px;top:521px;color:#232629">········ ········</div>
<div class="a" style="left:738.5px;top:537px;width:374.39999999999986px;height:15px;background:#eff0f1"></div>
<div class="a" style="left:1136.3px;top:537px;width:132.5999999999999px;height:15px;background:#eff0f1"></div>
<div class="a m" style="left:691px;top:536px;color:#a3a5a7">0040</div>
<div class="a m" style="left:738.5px;top:536px;color:#232629">16 17 18 19 1a 1b 1c 1d  1e 1f 20 21 22 23 24 25 </div>
<div class="a m" style="left:1136.3px;top:536px;color:#232629">········ ·· !&quot;#$%</div>
<div class="a" style="left:738.5px;top:552px;width:374.39999999999986px;height:15px;background:#eff0f1"></div>
<div class="a" style="left:1136.3px;top:552px;width:132.5999999999999px;height:15px;background:#eff0f1"></div>
<div class="a m" style="left:691px;top:551px;color:#a3a5a7">0050</div>
<div class="a m" style="left:738.5px;top:551px;color:#232629">26 27 28 29 2a 2b 2c 2d  2e 2f 30 31 32 33 34 35 </div>
<div class="a m" style="left:1136.3px;top:551px;color:#232629">&amp;&#x27;()*+,- ./012345</div>
<div class="a" style="left:738.5px;top:567px;width:39.0px;height:15px;background:#eff0f1"></div>
<div class="a" style="left:1136.3px;top:567px;width:15.599999999999909px;height:15px;background:#eff0f1"></div>
<div class="a m" style="left:691px;top:566px;color:#a3a5a7">0060</div>
<div class="a m" style="left:738.5px;top:566px;color:#232629">36 37 </div>
<div class="a m" style="left:1136.3px;top:566px;color:#232629">67</div>
<svg style="left:29px;top:754px" width="16" height="16" viewBox="0 0 16 16"><circle cx="8" cy="8.2" r="6.6" fill="#bdbdbb" stroke="#55575a" stroke-width="1"/></svg>
<svg style="left:52px;top:754px" width="17" height="16" viewBox="0 0 17 16">
<rect x="1.5" y="1.5" width="10.5" height="13" fill="#f7f5ec" stroke="#d5d2c4" stroke-width="0.8"/>
<rect x="1.5" y="1.5" width="10.5" height="3" fill="#3da3d8"/>
<path d="M6 2 L8 1.5 V4.5 Z" fill="#fff"/>
<path d="M5.2 12.3 L13.2 3.2 L15.2 5 L7.1 14 L4.6 14.7 Z" fill="#3b3d40"/>
<path d="M12.4 4.2 L14.3 5.9" stroke="#f0f0f0" stroke-width="0.6"/>
</svg>
<div class="a t" style="left:84.3px;top:756.4px;font-size:12.8px;letter-spacing:0.283px;color:#232629">Type (icmp.type), 1 byte</div>
<div class="a t" style="left:852.2px;top:756.4px;font-size:12.8px;letter-spacing:0.124px;color:#232629">Packets: 12 · Displayed: 12 (100.0%) · Dropped: 0 (0.0%)</div>
<div class="a t" style="left:1203.5px;top:756.4px;font-size:12.8px;letter-spacing:0.44px;color:#232629">Profile: Default</div>
</div></body></html>
